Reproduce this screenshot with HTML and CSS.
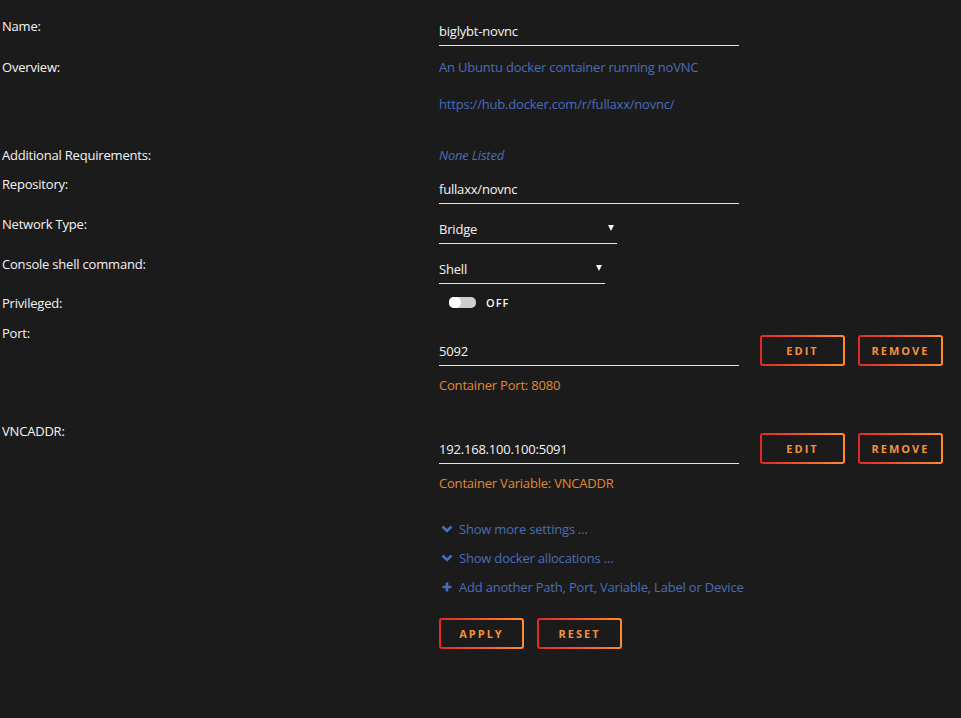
FILE: index.html
```html
<!DOCTYPE html>
<html lang="en">
<head>
  <meta charset="UTF-8">
  <title>Update Container</title>
  <link rel="stylesheet" href="styles.css">
</head>
<body>

  <main class="form">
    <div class="row">
      <div class="label">Name:</div>
      <div class="value"><div class="input wide">biglybt-novnc</div></div>
    </div>

    <div class="row overview">
      <div class="label">Overview:</div>
      <div class="value">
        <p class="blue first">An Ubuntu docker container running noVNC</p>
        <p class="blue">https://hub.docker.com/r/fullaxx/novnc/</p>
      </div>
    </div>

    <div class="row reqs">
      <div class="label">Additional Requirements:</div>
      <div class="value"><span class="blue italic">None Listed</span></div>
    </div>

    <div class="row">
      <div class="label">Repository:</div>
      <div class="value"><div class="input wide">fullaxx/novnc</div></div>
    </div>

    <div class="row">
      <div class="label">Network Type:</div>
      <div class="value"><div class="input select net">Bridge<span class="arrow"></span></div></div>
    </div>

    <div class="row console">
      <div class="label">Console shell command:</div>
      <div class="value"><div class="input select shell">Shell<span class="arrow"></span></div></div>
    </div>

    <div class="row priv">
      <div class="label">Privileged:</div>
      <div class="value switch">
        <span class="toggle"><span class="knob"></span></span>
        <span class="off">OFF</span>
      </div>
    </div>

    <div class="row cfg">
      <div class="label">Port:</div>
      <div class="value">
        <div class="cfg-line">
          <div class="input wide">5092</div>
          <button class="btn edit">Edit</button>
          <button class="btn">Remove</button>
        </div>
        <div class="hint">Container Port: 8080</div>
      </div>
    </div>

    <div class="row cfg vnc">
      <div class="label">VNCADDR:</div>
      <div class="value">
        <div class="cfg-line">
          <div class="input wide">192.168.100.100:5091</div>
          <button class="btn edit">Edit</button>
          <button class="btn">Remove</button>
        </div>
        <div class="hint">Container Variable: VNCADDR</div>
      </div>
    </div>

    <div class="row links">
      <div class="label"></div>
      <div class="value">
        <div class="more">
          <svg width="12" height="8" viewBox="0 0 12 8"><path d="M1.5 1.5 L6 6 L10.5 1.5" fill="none" stroke="#486dba" stroke-width="2.6"/></svg>
          Show more settings ...
        </div>
        <div class="more">
          <svg width="12" height="8" viewBox="0 0 12 8"><path d="M1.5 1.5 L6 6 L10.5 1.5" fill="none" stroke="#486dba" stroke-width="2.6"/></svg>
          Show docker allocations ...
        </div>
        <div class="more">
          <svg width="12" height="10" viewBox="0 0 12 10"><path d="M6 0.5 V9.5 M1.5 5 H10.5" fill="none" stroke="#486dba" stroke-width="2.6"/></svg>
          Add another Path, Port, Variable, Label or Device
        </div>
        <div class="actions">
          <button class="btn">Apply</button>
          <button class="btn">Reset</button>
        </div>
      </div>
    </div>
  </main>

</body>
</html>
```

FILE: styles.css
```css
body {
  margin: 0;
  padding: 17px 0 0 2px;
  background-color: #1c1b1b;
  color: #f4f4f4;
  font-family: "Open Sans", "Liberation Sans", sans-serif;
  font-size: 13px;
  line-height: 18px;
  letter-spacing: -0.2px;
}

p {
  margin: 0;
}

.row {
  display: flex;
  margin-bottom: 11px;
}

.label {
  width: 437px;
  flex: none;
}

.value {
  flex: 1;
}

.input {
  padding: 5px 0 5px;
  border-bottom: 1px solid #e4e2e4;
  color: #f4f4f4;
  box-sizing: border-box;
  height: 29px;
}

.input.wide {
  width: 300px;
}

.select {
  display: flex;
  justify-content: space-between;
  align-items: center;
  padding-right: 3px;
}

.select.net {
  width: 178px;
}

.select.shell {
  width: 166px;
}

.arrow {
  width: 0;
  height: 0;
  border-left: 3px solid transparent;
  border-right: 3px solid transparent;
  border-top: 6px solid #f2f2f2;
  margin-top: -2px;
}

.blue {
  color: #486dba;
}

.italic {
  font-style: italic;
}

.overview {
  margin-top: 12px;
  margin-bottom: 33px;
}

.overview .first {
  margin-bottom: 19px;
}

.console {
  margin-top: 1px;
  margin-bottom: 10px;
}

.priv {
  margin-bottom: 12px;
}

.switch {
  display: flex;
  align-items: center;
  padding-left: 10px;
}

.toggle {
  display: flex;
  width: 27px;
  height: 11px;
  border-radius: 5px;
  background-color: #cfcfcf;
  margin-top: -1px;
}

.knob {
  width: 12px;
  height: 11px;
  border-radius: 5px;
  background-color: #ffffff;
}

.off {
  margin-left: 10px;
  font-size: 11px;
  font-weight: 600;
  letter-spacing: 1px;
}

.cfg .value {
  padding-top: 11px;
}

.cfg-line {
  display: flex;
  align-items: flex-end;
}

.hint {
  margin-top: 10px;
  color: #e0892f;
}

.cfg {
  margin-bottom: 28px;
}

.vnc {
  margin-bottom: 28px;
}

.btn {
  width: 85px;
  height: 31px;
  border: 2px solid transparent;
  border-radius: 3px;
  background: linear-gradient(#1c1b1b, #1c1b1b) padding-box,
              linear-gradient(90deg, #e22828, #ff8c2f) border-box;
  color: #f5923a;
  font-family: "Open Sans", "Liberation Sans", sans-serif;
  font-size: 11px;
  font-weight: 700;
  letter-spacing: 2px;
  text-transform: uppercase;
  padding: 0;
  margin: 0 13px 0 0;
  cursor: pointer;
}

.btn.edit {
  margin-left: 21px;
}

.more {
  display: flex;
  align-items: center;
  gap: 6px;
  color: #486dba;
  margin-bottom: 11px;
  padding-left: 2px;
}

.actions {
  display: flex;
  margin-top: 22px;
}
```
